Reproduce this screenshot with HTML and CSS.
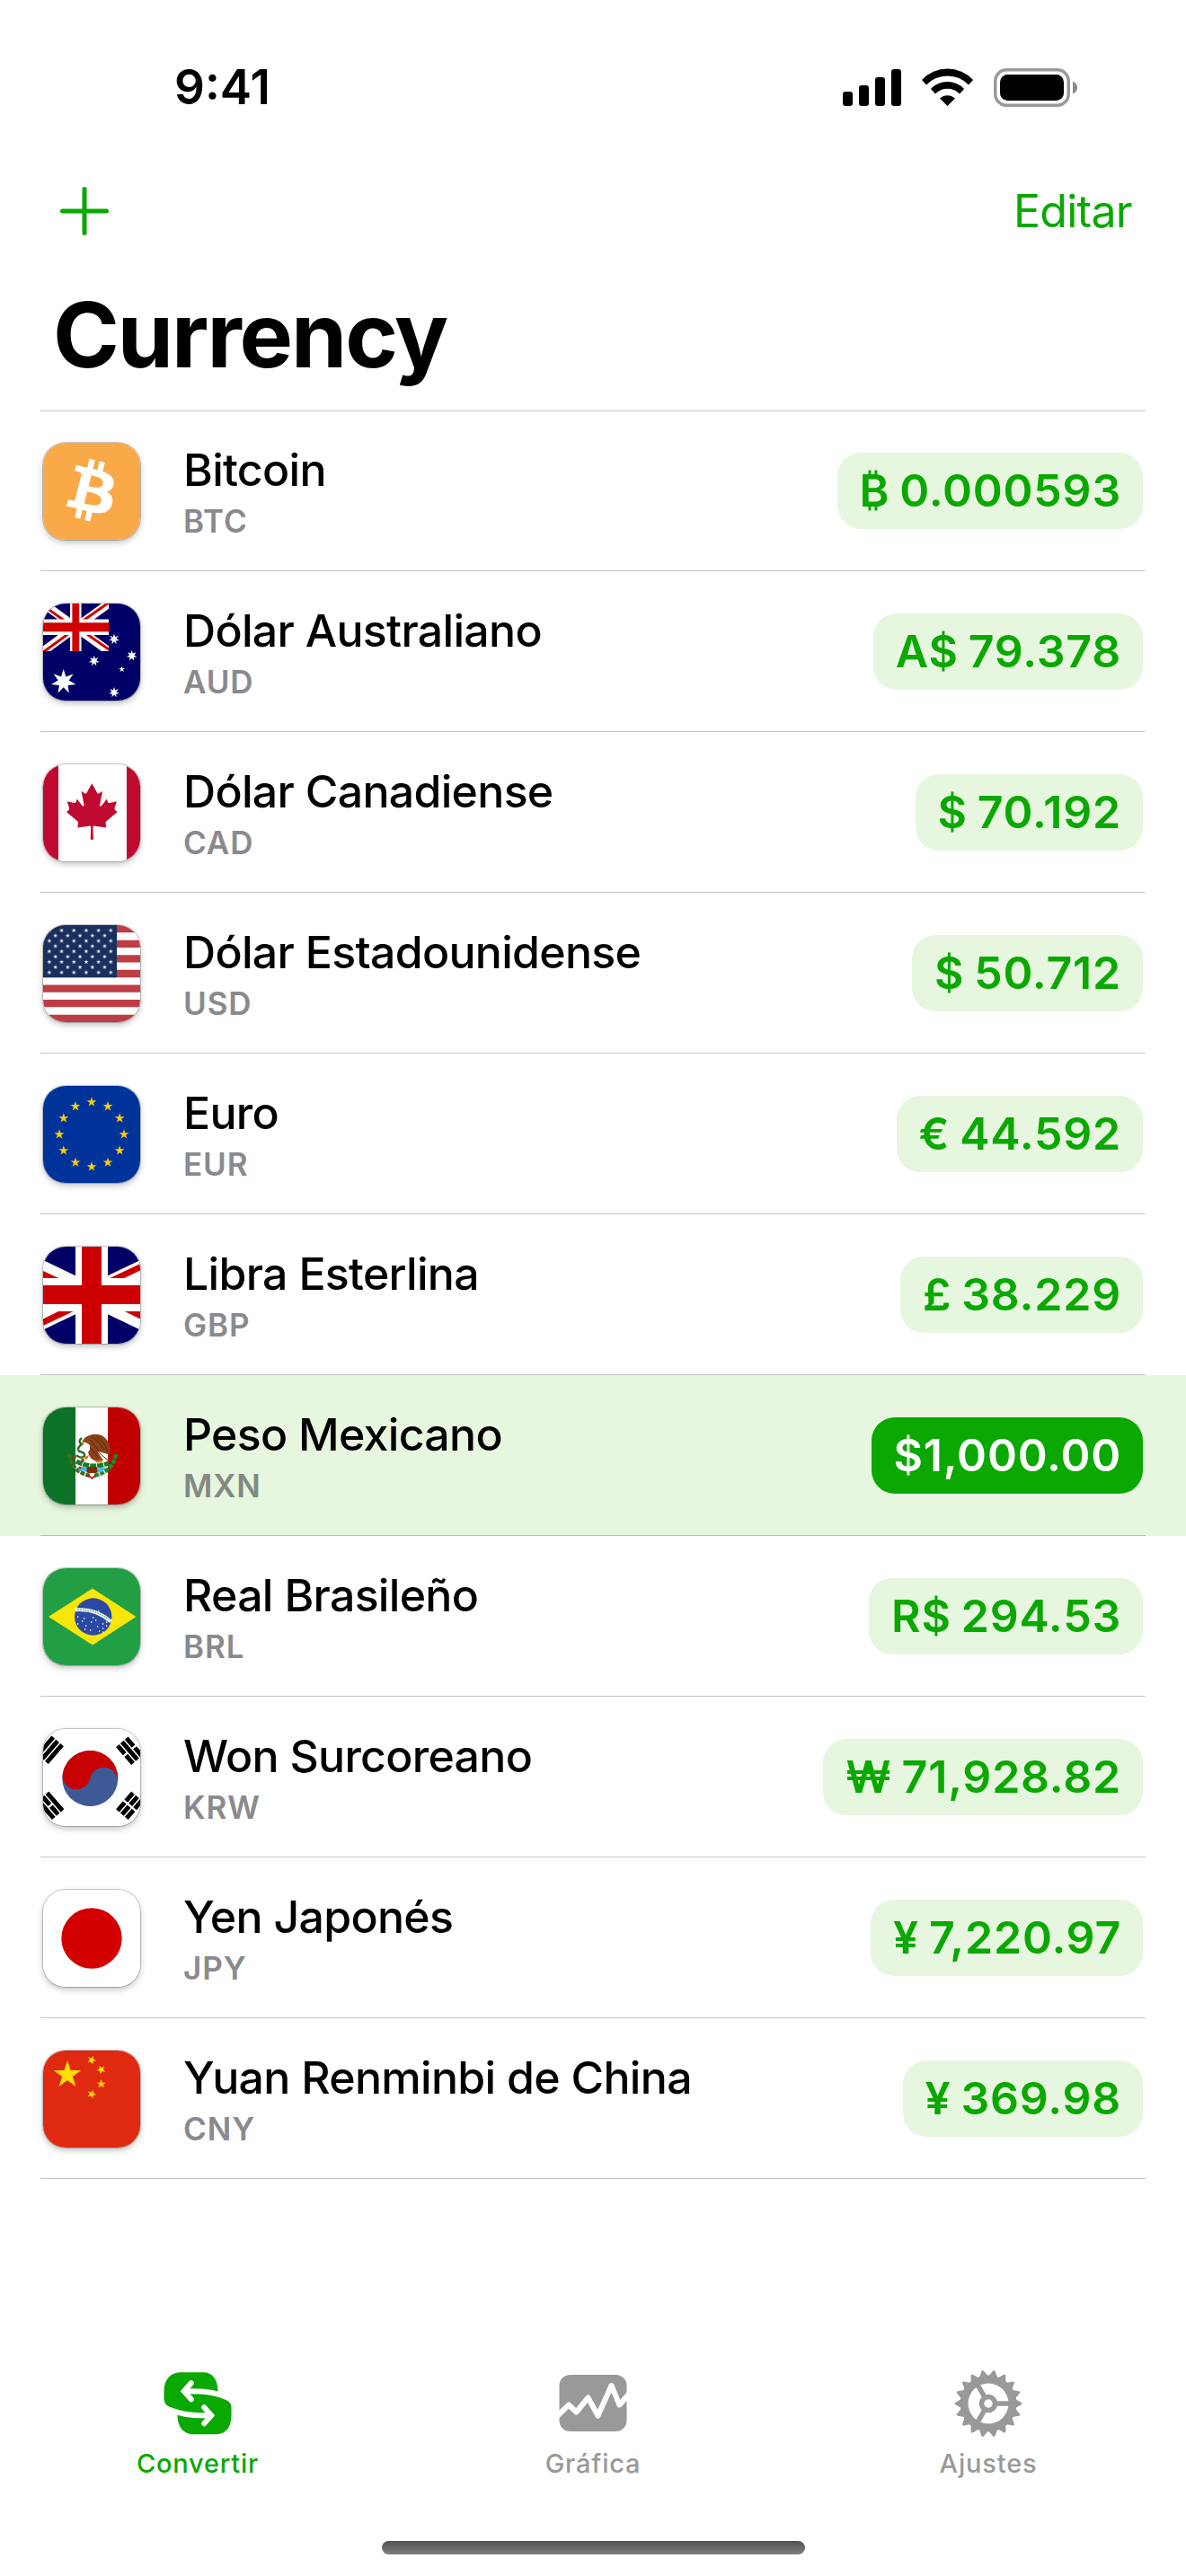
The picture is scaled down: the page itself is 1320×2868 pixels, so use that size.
FILE: index.html
```html
<!DOCTYPE html>
<html lang="es">
  <head>
    <meta charset="utf-8" />
    <title>Currency</title>
    <link rel="stylesheet" href="styles.css" />
  </head>
  <body>
    <!-- shared shapes -->
    <svg class="defs">
      <defs>
        <path id="star5" d="M0-1L.225-.309L.951-.309L.363.118L.588.809L0 .382L-.588.809L-.363.118L-.951-.309L-.225-.309z" />
        <path id="star7" d="M0-1L.193-.4L.782-.623L.433-.099L.975.223L.347.277L.434.901L0 .444L-.434.901L-.347.277L-.975.223L-.433-.099L-.782-.623L-.193-.4z" />
        <path id="tooth" d="M-5-30L-1.3-36.5Q0-38.5 1.3-36.5L5-30V30L1.3 36.5Q0 38.5-1.3 36.5L-5 30z" />
        <pattern id="stars" width="13.7" height="11.7" patternUnits="userSpaceOnUse">
          <use href="#star5" transform="translate(6.85 5.85) scale(2.7)" fill="#fff" />
        </pattern>
        <pattern id="stars2" x="6.85" y="5.85" width="13.7" height="11.7" patternUnits="userSpaceOnUse">
          <use href="#star5" transform="translate(6.85 5.85) scale(2.7)" fill="#fff" />
        </pattern>
      </defs>
    </svg>

    <header class="status">
      <span class="time">9:41</span>
      <div class="indicators">
        <svg class="signal" viewBox="0 0 65 43">
          <rect x="0" y="26" width="11" height="16" rx="3" />
          <rect x="18" y="19" width="11" height="23" rx="3" />
          <rect x="36" y="10" width="11" height="32" rx="3" />
          <rect x="54" y="1" width="11" height="41" rx="3" />
        </svg>
        <svg class="wifi" viewBox="0 0 57 43">
          <path d="M0 13A39 39 0 0 1 57 13L52 18.500A32.500 32.500 0 0 0 5 18.500z" />
          <path d="M10 23A25.500 25.500 0 0 1 47 23L42 28.500A19 19 0 0 0 15 28.500z" />
          <path d="M20 33.500A12.500 12.500 0 0 1 37 33.500L28.500 42z" />
        </svg>
        <svg class="battery" viewBox="0 0 93 43">
          <rect x="1.750" y="1.750" width="81.500" height="39.500" rx="12.500" fill="none" stroke="#999" stroke-width="3.500" />
          <rect x="7" y="7" width="71" height="29" rx="8.500" />
          <path d="M88 14.500Q93 17 93 21.500T88 28.500z" fill="#888" />
        </svg>
      </div>
    </header>

    <nav class="actions">
      <svg class="plus" viewBox="0 0 54 54"><path d="M27 2.500V51.500M2.500 27H51.500" /></svg>
      <a class="edit">Editar</a>
    </nav>

    <h1>Currency</h1>

    <ul class="list">
      <li>
        <div class="row">
          <svg class="flag" viewBox="0 0 108 108">
            <rect width="108" height="108" fill="#f9a947" />
            <path transform="translate(-1.700 -1.400) scale(1.740 1.720)" fill="#fff" fill-rule="evenodd" d="M46.103 27.444c.637-4.258-2.605-6.547-7.038-8.074l1.438-5.768-3.511-.875-1.400 5.616c-.923-.230-1.871-.447-2.813-.662l1.410-5.653-3.509-.875-1.439 5.766c-.764-.174-1.514-.346-2.242-.527l.004-.018-4.842-1.209-.934 3.750s2.605.597 2.550.634c1.422.355 1.679 1.296 1.636 2.042l-1.638 6.571-.006.025-2.296 9.205c-.174.432-.615 1.080-1.609.834.035.051-2.552-.637-2.552-.637l-1.743 4.019 4.569 1.139c.850.213 1.683.436 2.503.646l-1.453 5.834 3.507.875 1.439-5.772c.958.260 1.888.500 2.798.726l-1.434 5.745 3.511.875 1.453-5.823c5.987 1.133 10.489.676 12.384-4.739 1.527-4.360-.076-6.875-3.226-8.515 2.294-.529 4.022-2.038 4.483-5.155zM38.081 38.693c-1.085 4.360-8.426 2.003-10.806 1.412l1.928-7.729c2.380.594 10.012 1.770 8.878 6.317zM39.167 27.380c-.990 3.966-7.100 1.951-9.082 1.457l1.748-7.010c1.982.494 8.365 1.416 7.334 5.553z" />
          </svg>
          <div class="info"><b>Bitcoin</b><small>BTC</small></div>
          <span class="amount">₿ 0.000593</span>
        </div>
      </li>
      <li>
        <div class="row">
          <svg class="flag" viewBox="0 0 108 108">
            <rect width="108" height="108" fill="#006" />
            <svg width="73" height="53" viewBox="0 0 73 53">
              <path d="M0 0L73 53M73 0L0 53" stroke="#fff" stroke-width="9.500" />
              <path d="M-1 1.300L36 28M74-1.800L36 25M74 51.700L36 25M-1 54.800L36 28" stroke="#d00000" stroke-width="3" />
              <path d="M36.300 0V53" stroke="#fff" stroke-width="12.500" />
              <path d="M0 26.300H73" stroke="#fff" stroke-width="17.500" />
              <path d="M0 26.300H73" stroke="#d00000" stroke-width="10" />
              <path d="M36.300 0V53" stroke="#d00000" stroke-width="7.800" />
            </svg>
            <g fill="#fff">
              <use href="#star7" transform="translate(22.700 87) scale(14)" />
              <use href="#star7" transform="translate(79 39.600) scale(6)" />
              <use href="#star7" transform="translate(98.700 58) scale(6)" />
              <use href="#star7" transform="translate(56.700 63.800) scale(6)" />
              <use href="#star7" transform="translate(79 98.800) scale(6)" />
              <use href="#star5" transform="translate(87.700 73.200) scale(3.600)" />
            </g>
          </svg>
          <div class="info"><b>Dólar Australiano</b><small>AUD</small></div>
          <span class="amount">A$ 79.378</span>
        </div>
      </li>
      <li>
        <div class="row">
          <svg class="flag" viewBox="0 0 108 108">
            <rect width="108" height="108" fill="#fff" />
            <path d="M0 0H17V108H0zM93 0H108V108H93z" fill="#bf0a30" />
            <path fill="#bf0a30" d="M54.300 21.300L48.300 32Q47.500 33 46 32L42.500 30L45.500 45Q45.800 48 43.500 46L37.700 38.600L36.500 42Q36.200 43.200 34.800 43L26.700 41.300L29 48.600Q29.300 50.500 28.500 51L26 53L38.500 63.500Q39.500 64.500 39 66L38.300 70.600L52 68.500Q53.200 68.500 53.200 69.800L52.700 83.700H55.900L55.400 69.800Q55.400 68.500 56.600 68.500L70.300 70.600L69.600 66Q69.100 64.500 70.100 63.500L82.600 53L80.100 51Q79.300 50.500 79.600 48.600L81.900 41.300L73.800 43Q72.400 43.200 72.100 42L70.900 38.600L65.100 46Q62.800 48 63.100 45L66.100 30L62.600 32Q61.100 33 60.300 32z" />
          </svg>
          <div class="info"><b>Dólar Canadiense</b><small>CAD</small></div>
          <span class="amount">$ 70.192</span>
        </div>
      </li>
      <li>
        <div class="row">
          <svg class="flag" viewBox="0 0 108 108">
            <rect width="108" height="108" fill="#fff" />
            <path d="M0 4.150H108M0 20.800H108M0 37.400H108M0 54H108M0 70.600H108M0 87.200H108M0 103.900H108" stroke="#bd3d44" stroke-width="8.300" />
            <rect width="82" height="58.200" fill="#192f5d" />
            <rect width="82.200" height="58.500" fill="url(#stars)" />
            <rect x="6.850" y="5.850" width="68.500" height="46.800" fill="url(#stars2)" />
          </svg>
          <div class="info"><b>Dólar Estadounidense</b><small>USD</small></div>
          <span class="amount">$ 50.712</span>
        </div>
      </li>
      <li>
        <div class="row">
          <svg class="flag" viewBox="0 0 108 108">
            <rect width="108" height="108" fill="#039" />
            <g fill="#fc0">
              <use href="#star5" transform="translate(54 18) scale(5.700)" />
              <use href="#star5" transform="translate(72 22.800) scale(5.700)" />
              <use href="#star5" transform="translate(85.200 36) scale(5.700)" />
              <use href="#star5" transform="translate(90 54) scale(5.700)" />
              <use href="#star5" transform="translate(85.200 72) scale(5.700)" />
              <use href="#star5" transform="translate(72 85.200) scale(5.700)" />
              <use href="#star5" transform="translate(54 90) scale(5.700)" />
              <use href="#star5" transform="translate(36 85.200) scale(5.700)" />
              <use href="#star5" transform="translate(22.800 72) scale(5.700)" />
              <use href="#star5" transform="translate(18 54) scale(5.700)" />
              <use href="#star5" transform="translate(22.800 36) scale(5.700)" />
              <use href="#star5" transform="translate(36 22.800) scale(5.700)" />
            </g>
          </svg>
          <div class="info"><b>Euro</b><small>EUR</small></div>
          <span class="amount">€ 44.592</span>
        </div>
      </li>
      <li>
        <div class="row">
          <svg class="flag" viewBox="0 0 108 108">
            <rect width="108" height="108" fill="#fff" />
            <path d="M0 0H36V32.300L0 15zM108 0H72V32.300L108 15zM0 108H36V75.300L0 92.500zM108 108H72V75.300L108 92.500z" fill="#006" />
            <path d="M43 0H65V43H108V64H65V108H43V64H0V43H43z" fill="#c00" />
            <path d="M0 27L17.300 35H0zM74.300 35H90.300L108 26.500V19zM0 80.500L17 72H33.700L0 88zM108 80.500L90.700 72H108z" fill="#c00" />
          </svg>
          <div class="info"><b>Libra Esterlina</b><small>GBP</small></div>
          <span class="amount">£ 38.229</span>
        </div>
      </li>
      <li class="selected">
        <div class="row">
          <svg class="flag" viewBox="0 0 108 108">
            <rect width="108" height="108" fill="#fff" />
            <path d="M0 0H36V108H0z" fill="#0b7226" />
            <path d="M72 0H108V108H72z" fill="#c00000" />
            <!-- wreath -->
            <g fill="none" stroke-width="4.500" stroke-dasharray="5 1.200">
              <path d="M29 52Q31 71 52 76" stroke="#3f6b20" />
              <path d="M81 52Q78 71 57 76" stroke="#1f8a2a" />
            </g>
            <path d="M37 60Q54 69 73 62" fill="none" stroke="#167d1f" stroke-width="5" stroke-dasharray="7 1" />
            <path d="M39 67Q45 64 49 67V72Q44 70 40 71zM61 68Q66 65 70 67L66 72L60 72z" fill="#4fb3e8" />
            <rect x="48.500" y="66" width="12" height="7" rx="2" fill="#7a2c12" />
            <path d="M50 75L54.500 79L59 75" fill="none" stroke="#b3261e" stroke-width="1.800" />
            <circle cx="35" cy="55" r="1.900" fill="#b3261e" />
            <circle cx="44" cy="59" r="1.900" fill="#b3261e" />
            <circle cx="41" cy="67" r="1.500" fill="#b3261e" />
            <!-- snake -->
            <path d="M43 34Q38 38 43 41Q37 45 40 49Q47 50 46 54Q42 58 37 53" fill="none" stroke="#2b6b2a" stroke-width="2.400" />
            <!-- eagle -->
            <path d="M43 39Q46 32 52 31Q57 28.500 65 31Q74 36 74.500 46Q75 50 73 53L74 61Q67 55 61 50L67 59Q62 61 57 59Q52 57 50 50Q54 45 51 41Q47 38 43 39z" fill="#8b4216" />
            <path d="M55 33Q63 38 68 47M52 36Q59 43 64 52M61 33Q69 39 72 50M53 45Q57 51 61 55" fill="none" stroke="#55280f" stroke-width="1" />
            <path d="M61 49L72 58L72 52z" fill="#fff" />
            <path d="M42 39Q44 37 47 38L44 41zM43 56L51 53L49 58zM57 61L64 58L66 62z" fill="#c98a1f" />
          </svg>
          <div class="info"><b>Peso Mexicano</b><small>MXN</small></div>
          <span class="amount">$1,000.00</span>
        </div>
      </li>
      <li>
        <div class="row">
          <svg class="flag" viewBox="0 0 108 108">
            <rect width="108" height="108" fill="#229e45" />
            <path d="M6 54L55 22.400L103.500 54L55 85.500z" fill="#f8e509" />
            <circle cx="55.700" cy="54" r="20.700" fill="#2b49a3" />
            <path d="M35.800 46.300Q59 44.500 75.500 59.500" fill="none" stroke="#fff" stroke-width="3.800" />
            <path d="M38 46.300Q58 45 74 57.800" fill="none" stroke="#7cba8f" stroke-width="1.600" stroke-dasharray="2 .8" />
            <path d="M38 54h1.300M43 59h1.300M38 62h1.300M45 56h1.300M53 60h1.300M47 64h1.300M52 69h1.300M61 48h1.300M58 58h1.300M55 55h1.300M62 70h1.300M66 67h1.300M70 64h1.300M66 62h1.300M60 65h1.300M46 68h1.300M70 60h1.300M66 71h1.300" stroke="#fff" stroke-width="1.300" />
          </svg>
          <div class="info"><b>Real Brasileño</b><small>BRL</small></div>
          <span class="amount">R$ 294.53</span>
        </div>
      </li>
      <li>
        <div class="row">
          <svg class="flag" viewBox="0 0 108 108">
            <rect width="108" height="108" fill="#fff" />
            <g transform="translate(52.300 55) rotate(12)">
              <circle r="31" fill="#3d5a97" />
              <path d="M-31 0A31 31 0 0 1 31 0A15.500 15.500 0 0 0 0 0A15.500 15.500 0 0 1-31 0z" fill="#c70000" />
            </g>
            <g stroke="#000" stroke-width="5">
              <path transform="translate(12.500 27.500) rotate(-49)" d="M-13 0H13M-13-6.500H13M-13-13H13" />
              <path transform="translate(91.500 28.500) rotate(49)" d="M-13 0H-1.200M1.200 0H13M-13-6.500H13M-13-13H-1.200M1.200-13H13" />
              <path transform="translate(13 81) rotate(229)" d="M-13 0H13M-13-6.500H-1.200M1.200-6.500H13M-13-13H13" />
              <path transform="translate(91.500 81) rotate(131)" d="M-13 0H-1.200M1.200 0H13M-13-6.500H-1.200M1.200-6.500H13M-13-13H-1.200M1.200-13H13" />
            </g>
          </svg>
          <div class="info"><b>Won Surcoreano</b><small>KRW</small></div>
          <span class="amount">₩ 71,928.82</span>
        </div>
      </li>
      <li>
        <div class="row">
          <svg class="flag" viewBox="0 0 108 108">
            <rect width="108" height="108" fill="#fff" />
            <circle cx="54" cy="54" r="33.700" fill="#d30000" />
          </svg>
          <div class="info"><b>Yen Japonés</b><small>JPY</small></div>
          <span class="amount">¥ 7,220.97</span>
        </div>
      </li>
      <li>
        <div class="row">
          <svg class="flag" viewBox="0 0 108 108">
            <rect width="108" height="108" fill="#df2910" />
            <g fill="#ffde00">
              <use href="#star5" transform="translate(27 27) scale(16)" />
              <use href="#star5" transform="translate(54 10.700) rotate(23) scale(5.300)" />
              <use href="#star5" transform="translate(64.700 21.300) rotate(46) scale(5.300)" />
              <use href="#star5" transform="translate(64.700 37.300) scale(5.300)" />
              <use href="#star5" transform="translate(54 48.600) rotate(21) scale(5.300)" />
            </g>
          </svg>
          <div class="info"><b>Yuan Renminbi de China</b><small>CNY</small></div>
          <span class="amount">¥ 369.98</span>
        </div>
      </li>
    </ul>

    <footer class="tabs">
      <a class="tab active">
        <svg viewBox="0 0 76 76">
          <g transform="translate(.500 3.300)">
            <path d="M19 0H44C54 0 60 8 60 21V27.300L69 30.600Q75 33 75 40V48C75 61 69 69 57 69H33C22 69 15 61 15 48V41.700L6 38.400Q0 36 0 29V21C0 8 7 0 19 0z" />
            <g fill="none" stroke="#fff" stroke-width="6">
              <path d="M62 24.800C50 21 42 21 22 21M4 41C25 48 33 48 53 48" />
              <path d="M30.300 12L22.300 21L30.300 30M44.700 39L52.700 48L44.700 57" stroke-linecap="round" />
            </g>
          </g>
        </svg>
        <span>Convertir</span>
      </a>
      <a class="tab">
        <svg viewBox="0 0 76 76">
          <rect x=".500" y="6" width="75" height="63" rx="12" />
          <path d="M-2 52L11 39.500L19.500 47.500L32.500 31.500L43.500 51.500L58.500 18L67.500 39.500L79 26" fill="none" stroke="#fff" stroke-width="6" stroke-linejoin="round" />
        </svg>
        <span>Gráfica</span>
      </a>
      <a class="tab">
        <svg viewBox="0 0 76 76">
          <g transform="translate(38 38) rotate(90)">
            <use href="#tooth" />
            <use href="#tooth" transform="rotate(20)" />
            <use href="#tooth" transform="rotate(40)" />
            <use href="#tooth" transform="rotate(60)" />
            <use href="#tooth" transform="rotate(80)" />
            <use href="#tooth" transform="rotate(100)" />
            <use href="#tooth" transform="rotate(120)" />
            <use href="#tooth" transform="rotate(140)" />
            <use href="#tooth" transform="rotate(160)" />
            <circle r="31.500" />
            <circle r="22.500" fill="#fff" />
            <path d="M0 0V-24M0 0L20.800 12M0 0L-20.800 12" stroke="#999" stroke-width="5.500" />
            <circle r="10.300" />
            <circle r="4.700" fill="#fff" />
          </g>
        </svg>
        <span>Ajustes</span>
      </a>
    </footer>
    <div class="home"></div>
  </body>
</html>
```
FILE: styles.css
```css
* {
  box-sizing: border-box;
  margin: 0;
  padding: 0;
}

body {
  width: 1320px;
  height: 2868px;
  display: flex;
  flex-direction: column;
  background: #fff;
  color: #000;
  font-family: Inter, "Noto Sans", sans-serif;
  overflow: hidden;
}

svg {
  display: block;
  flex-shrink: 0;
}

.defs {
  position: absolute;
  width: 0;
  height: 0;
}

.status {
  height: 148px;
  padding: 46px 121px 0 194px;
  display: flex;
  justify-content: space-between;
  align-items: center;
}

.time {
  font-size: 53px;
  font-weight: 560;
}

.indicators {
  display: flex;
  gap: 23px;
}

.signal {
  width: 65px;
  height: 43px;
}

.wifi {
  width: 57px;
  height: 43px;
}

.battery {
  width: 93px;
  height: 43px;
}

.actions {
  height: 174px;
  padding: 0 60px 0 67px;
  display: flex;
  justify-content: space-between;
  align-items: center;
  color: #0aa800;
}

.plus {
  width: 54px;
  height: 54px;
  fill: none;
  stroke: #0aa800;
  stroke-width: 5;
  stroke-linecap: round;
}

.edit {
  font-size: 50px;
  font-weight: 420;
  letter-spacing: -0.7px;
}

h1 {
  padding-left: 59px;
  font-size: 100px;
  font-weight: 700;
  line-height: 102px;
  letter-spacing: -2.1px;
}

.list {
  list-style: none;
  margin-top: 33px;
}

.row {
  height: 179px;
  margin: 0 45px;
  padding: 2px 3px 0;
  display: flex;
  align-items: center;
  border-bottom: 1px solid #c6c6c8;
}

.list li:first-child .row {
  box-shadow: inset 0 1px #c6c6c8;
}

.selected {
  background: #e7f6df;
}

.selected .row {
  border-color: #b3c2b0;
}

.flag {
  width: 108px;
  height: 108px;
  border-radius: 25px;
  box-shadow: 0 0 0 1px rgba(0, 0, 0, 0.2), 0 3px 7px rgba(0, 0, 0, 0.25);
}

.info {
  flex: 1;
  margin-left: 48px;
  display: flex;
  flex-direction: column;
  gap: 5px;
}

.info b {
  font-size: 50px;
  font-weight: 500;
  line-height: 60px;
  letter-spacing: -0.7px;
}

.info small {
  font-size: 35px;
  font-weight: 600;
  line-height: 44px;
  letter-spacing: 0.9px;
  color: #8a8a8e;
}

.selected small {
  color: #828a83;
}

.amount {
  height: 85px;
  margin-bottom: 1px;
  padding: 0 24px 0 25px;
  border-radius: 26px;
  background: #e7f6df;
  color: #0aa800;
  font-size: 50px;
  font-weight: 570;
  line-height: 85px;
  letter-spacing: 0.8px;
  word-spacing: -2.5px;
  white-space: nowrap;
}

.selected .amount {
  background: #0aa800;
  color: #fff;
}

.tabs {
  margin-top: auto;
  display: grid;
  grid-template-columns: repeat(3, 440px);
}

.tab {
  display: flex;
  flex-direction: column;
  align-items: center;
  gap: 11px;
  color: #999;
  fill: #999;
  font-size: 29px;
  font-weight: 500;
  line-height: 36px;
  letter-spacing: 0.8px;
}

.tab svg {
  width: 76px;
  height: 76px;
}

.active {
  color: #0aa800;
  fill: #0aa800;
}

.home {
  width: 471px;
  height: 15px;
  margin: 68px auto 24px;
  border-radius: 8px;
  background: linear-gradient(#505050, #808080);
}
```
